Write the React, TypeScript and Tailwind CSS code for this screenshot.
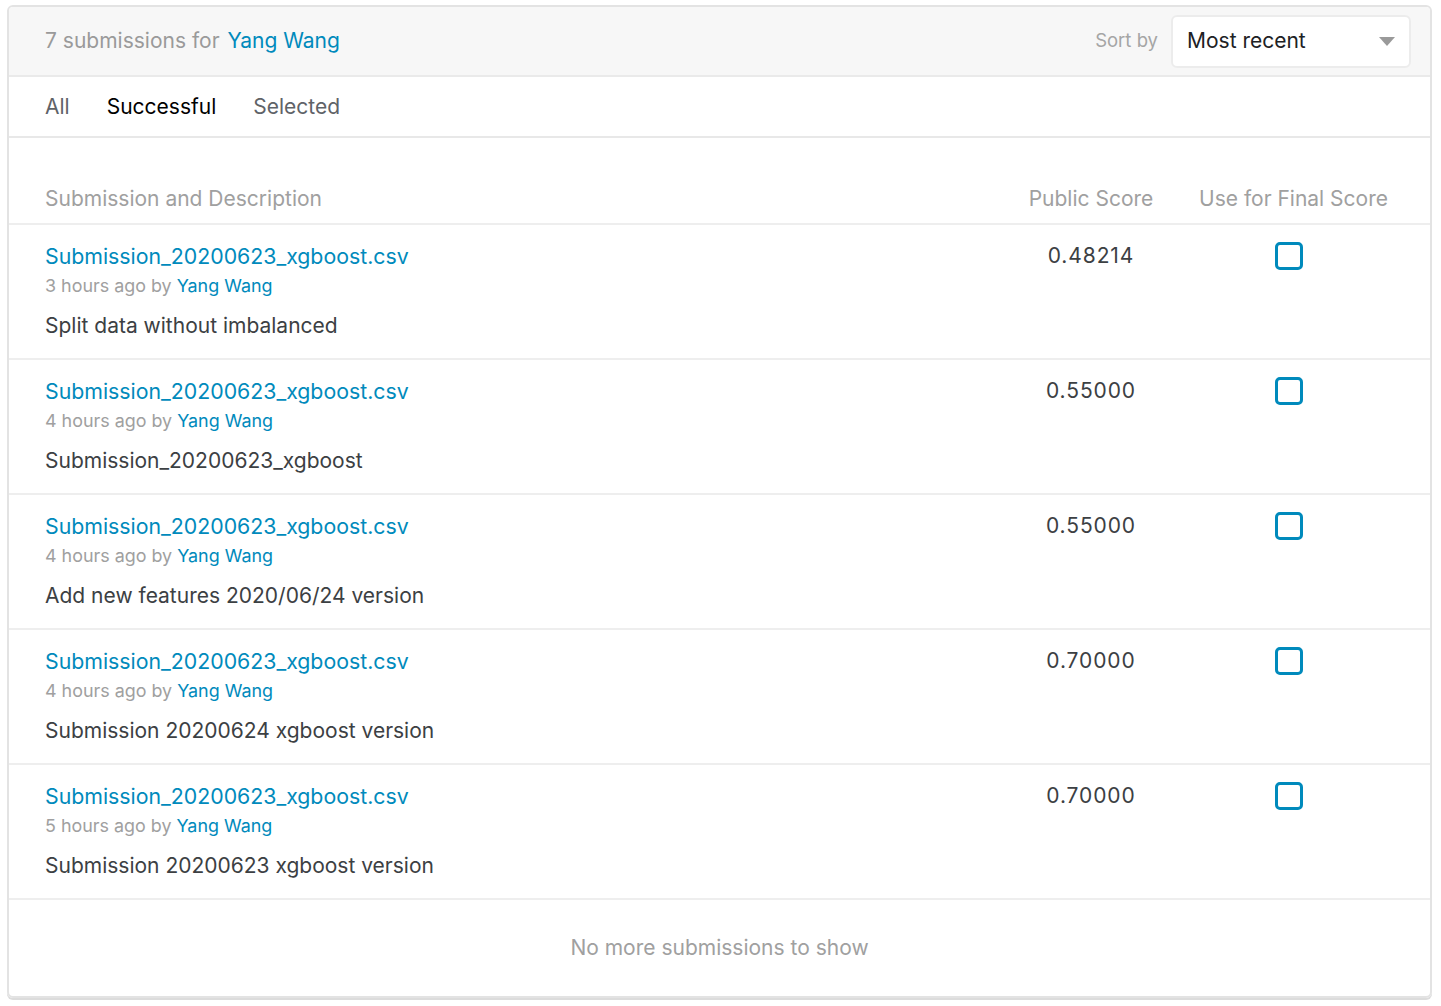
import React from 'react';

type Submission = {
  file: string;
  ago: string;
  description: string;
  score: string;
};

const submissions: Submission[] = [
  { file: 'Submission_20200623_xgboost.csv', ago: '3 hours ago', description: 'Split data without imbalanced', score: '0.48214' },
  { file: 'Submission_20200623_xgboost.csv', ago: '4 hours ago', description: 'Submission_20200623_xgboost', score: '0.55000' },
  { file: 'Submission_20200623_xgboost.csv', ago: '4 hours ago', description: 'Add new features 2020/06/24 version', score: '0.55000' },
  { file: 'Submission_20200623_xgboost.csv', ago: '4 hours ago', description: 'Submission 20200624 xgboost version', score: '0.70000' },
  { file: 'Submission_20200623_xgboost.csv', ago: '5 hours ago', description: 'Submission 20200623 xgboost version', score: '0.70000' },
];

const SubmissionRow = ({ s }: { s: Submission }) => (
  <div className="flex h-[135px] border-b-2 border-[#eeeeee] pt-[17px]">
    <div className="flex-1 pl-[36px]">
      <a href="#" className="block text-[21.3px] leading-[28px] text-[#008abc]">
        {s.file}
      </a>
      <div className="mt-[4px] text-[17.9px] leading-[24px] text-[#a0a0a0]">
        {s.ago} by <span className="text-[#008abc]">Yang Wang</span>
      </div>
      <div className="mt-[15px] text-[21px] leading-[26px] text-[#3c4043]">{s.description}</div>
    </div>
    <div className="w-[150px] text-center text-[21px] leading-[28px] tracking-[0.9px] text-[#3c4043]">
      {s.score}
    </div>
    <div className="ml-[34px] mr-[43px] flex w-[187px] justify-center">
      <div className="mr-[10px] h-[28px] w-[28px] rounded-[5px] border-[3px] border-[#008abc] bg-white" />
    </div>
  </div>
);

export default function App() {
  return (
    <div className="min-h-screen bg-white pl-[7px] pt-[5px] font-['Inter','Liberation_Sans',sans-serif]">
      <div className="w-[1425px] overflow-hidden rounded-[6px] border-2 border-[#e3e3e3] shadow-[0_2px_0_#dcdcdc]">
        <div className="flex h-[70px] items-center justify-between border-b-2 border-[#eaeaea] bg-[#f7f7f7] pl-[36px] pr-[19px]">
          <div className="text-[21px] text-[#9a9a9a]">
            7 submissions for <span className="ml-[2px] text-[#008abc]">Yang Wang</span>
          </div>
          <div className="flex items-center">
            <span className="mr-[13px] text-[18.5px] text-[#a5a5a5]">Sort by</span>
            <div className="flex h-[53px] w-[240px] items-center justify-between rounded-[6px] border-2 border-[#ececec] bg-white pl-[14px] pr-[14px]">
              <span className="text-[21px] text-[#202124]">Most recent</span>
              <svg width="16" height="9" viewBox="0 0 16 9">
                <path d="M0 0 L16 0 L8 9 Z" fill="#9a9a9a" />
              </svg>
            </div>
          </div>
        </div>

        <div className="flex h-[61px] items-center gap-[37px] border-b-2 border-[#e8e8e8] pl-[36px] text-[21px]">
          <span className="text-[#5f6368]">All</span>
          <span className="text-black">Successful</span>
          <span className="text-[#5f6368]">Selected</span>
        </div>

        <div className="flex h-[87px] items-end whitespace-nowrap border-b-2 border-[#eeeeee] pb-[9px] text-[21px] text-[#a0a0a0]">
          <div className="flex-1 pl-[36px]">Submission and Description</div>
          <div className="w-[150px] text-center">Public Score</div>
          <div className="ml-[34px] mr-[43px] flex w-[187px] justify-center">Use for Final Score</div>
        </div>

        {submissions.map((s, i) => (
          <SubmissionRow key={i} s={s} />
        ))}

        <div className="flex h-[96px] items-center justify-center text-[21px] text-[#a0a0a0]">
          No more submissions to show
        </div>
      </div>
    </div>
  );
}
